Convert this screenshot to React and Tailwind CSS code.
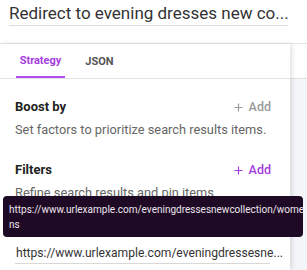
import React from 'react';

const font = { fontFamily: "Roboto, 'Liberation Sans', sans-serif" };

function PlusIcon({ className }) {
  return (
    <svg viewBox="0 0 10 10" className={className} fill="none" stroke="currentColor" strokeWidth="1.3">
      <path d="M5 0.5v9M0.5 5h9" />
    </svg>
  );
}

function Section({ title, text, active }) {
  return (
    <div>
      <div className="flex items-center justify-between h-[20px]">
        <span className="text-[13px] font-bold text-[#222]">{title}</span>
        <button className={`flex items-center gap-[6px] text-[12.5px] font-medium ${active ? 'text-[#a53de0]' : 'text-[#9a9a9a]'}`}>
          <PlusIcon className="w-[9px] h-[9px]" />
          <span>Add</span>
        </button>
      </div>
      <p className="mt-[3px] text-[12.8px] text-[#666] leading-[20px]">{text}</p>
    </div>
  );
}

export default function App() {
  return (
    <div className="relative w-[307px] h-[270px] overflow-hidden bg-white" style={font}>
      {/* title */}
      <div className="pl-[9px] pr-[18px] pt-[4px] h-[44px] border-b border-[#e6e6e6]">
        <div className="border-b border-[#dcdcdc] pb-[2px] w-[279px]">
          <h1 className="text-[17px] leading-[19px] text-[#333] whitespace-nowrap">
            Redirect to evening dresses new co...
          </h1>
        </div>
      </div>

      <div className="flex h-[226px]">
        {/* panel */}
        <div className="w-[290px] shrink-0 bg-white shadow-[2px_0_5px_rgba(0,0,0,0.12)] relative z-10">
          <div className="flex gap-[16px] pl-[16px] h-[35px] border-b border-[#e2e2e2]">
            <div className="w-[49px] pt-[2px] flex items-center justify-center border-b-2 border-[#b04cf0] text-[11px] font-bold text-[#a53de0]">
              Strategy
            </div>
            <div className="w-[37px] pt-[2px] flex items-center justify-center text-[11px] font-bold text-[#555]">
              JSON
            </div>
          </div>

          <div className="pl-[15px] pr-[19px] pt-[18px] flex flex-col gap-[20px]">
            <Section title="Boost by" text="Set factors to prioritize search results items." />
            <Section title="Filters" text="Refine search results and pin items" active />
          </div>

          <div className="ml-[15px] mr-[20px] mt-[42px] border-b border-[#d8d8d8] pb-[1px]">
            <div className="pl-[1px] text-[12.1px] leading-[17px] text-[#333] whitespace-nowrap">
              https://www.urlexample.com/eveningdressesne...
            </div>
          </div>
        </div>

        {/* right area */}
        <div className="flex-1 flex flex-col">
          <div className="h-[35px] bg-white border-b border-[#e2e2e2]" />
          <div className="flex-1 bg-[#f4f5f8]" />
        </div>
      </div>

      {/* tooltip */}
      <div className="absolute left-[3px] top-[196px] w-[300px] h-[41px] z-20 rounded-[4px] bg-[#1f0a25] pl-[6px] pr-[2px] pt-[6px] text-[10px] leading-[15px] text-[#ece6ee] whitespace-nowrap">
        https://www.urlexample.com/eveningdressesnewcollection/wome
        <br />
        ns
      </div>
    </div>
  );
}
